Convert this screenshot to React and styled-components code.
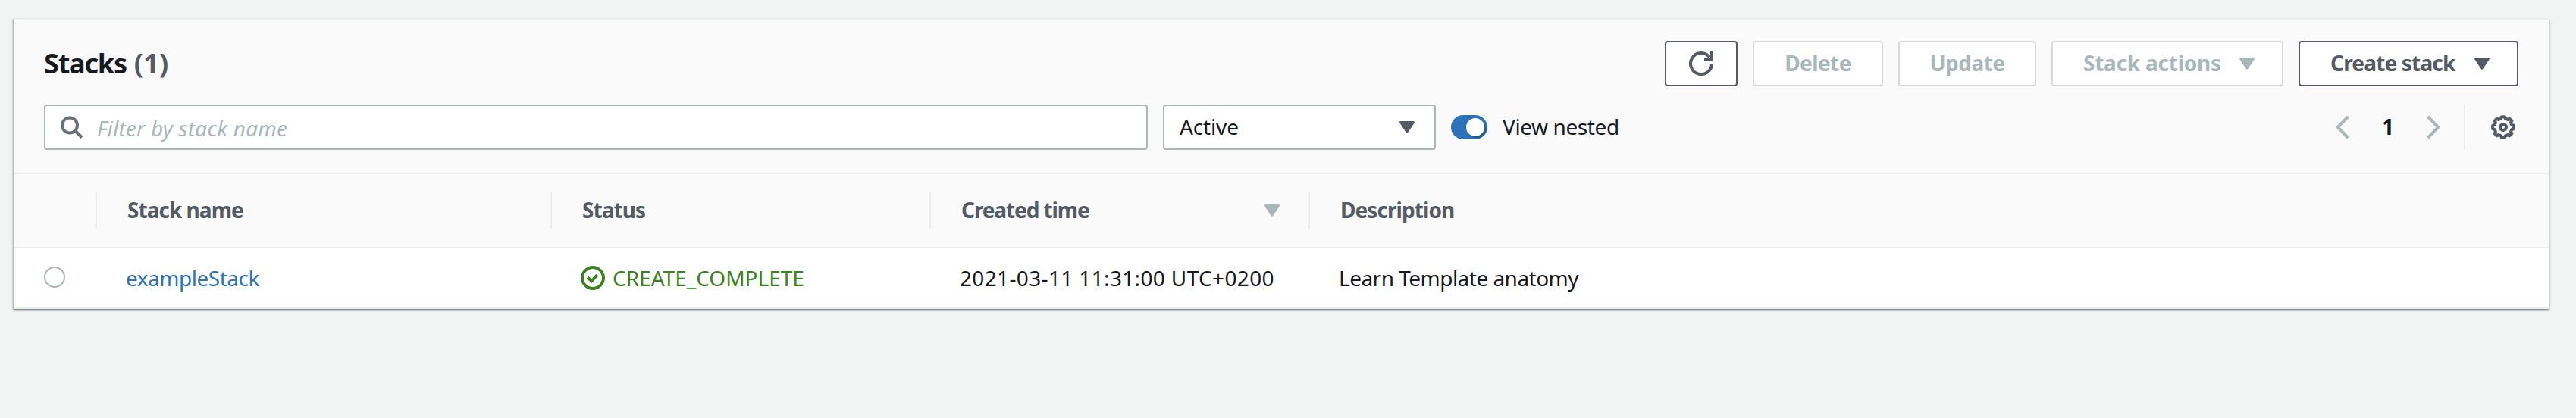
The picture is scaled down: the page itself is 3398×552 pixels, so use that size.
import React from 'react';
import styled, { createGlobalStyle } from 'styled-components';

const GlobalStyle = createGlobalStyle`
  * { box-sizing: border-box; }
  body {
    margin: 0;
    background: #f2f3f3;
    color: #16191f;
    font: 400 28px/40px "Noto Sans", "Open Sans", sans-serif;
  }
  svg { display: block; flex: none; }
`;

const Page = styled.main`
  min-height: 552px;
  padding: 24px 36px 0 18px;
`;

const Panel = styled.section`
  border-top: 2px solid #eaeded;
  background: #fff;
  box-shadow:
    0 2px 2px 0 rgba(0, 28, 36, 0.3),
    2px 2px 2px 0 rgba(0, 28, 36, 0.15),
    -2px 2px 2px 0 rgba(0, 28, 36, 0.15);
`;

const Header = styled.header`
  display: flex;
  flex-direction: column;
  gap: 24px;
  padding: 28px 40px 30px;
  background: #fafafa;
  border-bottom: 2px solid #eaeded;
`;

const Bar = styled.div`
  display: flex;
  align-items: center;
  justify-content: space-between;
  height: 60px;
`;

const Text = styled.span`
  white-space: nowrap;
  letter-spacing: ${(p) => p.$track || 0}px;
`;

const Title = styled.h2`
  display: flex;
  gap: 10px;
  margin: 0;
  font-size: 36px;
  line-height: 48px;
`;

const Counter = styled(Text)`
  color: #545b64;
`;

const Actions = styled.div`
  display: flex;
  gap: 20px;
`;

const Button = styled.button`
  display: flex;
  align-items: center;
  justify-content: ${(p) => (p.$menu ? 'space-between' : 'center')};
  width: ${(p) => p.$width}px;
  height: 60px;
  padding: ${(p) => (p.$menu ? '0 36px 0 40px' : '0')};
  border: 2px solid ${(p) => (p.disabled ? '#d5dbdb' : '#545b64')};
  border-radius: 4px;
  background: #fff;
  color: ${(p) => (p.disabled ? '#aab7b8' : '#545b64')};
  font: inherit;
  font-weight: 700;

  ${Text} { padding-bottom: 2px; }
`;

const Group = styled.div`
  display: flex;
  align-items: center;
`;

const Field = styled.div`
  display: flex;
  align-items: center;
  height: 60px;
  border: 2px solid #aab7b8;
  border-radius: 4px;
  background: #fff;
`;

const Search = styled(Field)`
  gap: 18px;
  width: 1456px;
  padding-left: 20px;
`;

const Placeholder = styled(Text)`
  padding-top: 2px;
  color: #aab7b8;
  font-style: italic;
`;

const Select = styled(Field)`
  justify-content: space-between;
  width: 360px;
  margin: 0 20px;
  padding: 0 26px 0 20px;
  color: #545b64;

  ${Text} { padding-bottom: 2px; color: #16191f; }
`;

const Toggle = styled.span`
  display: flex;
  justify-content: flex-end;
  width: 48px;
  height: 32px;
  margin-right: 20px;
  padding: 4px;
  border-radius: 16px;
  background: #2e73b8;

  &::after {
    content: '';
    width: 24px;
    height: 24px;
    border-radius: 50%;
    background: #fff;
    box-shadow: 2px 2px 2px rgba(0, 0, 0, 0.25);
  }
`;

const ToggleLabel = styled(Text)`
  padding-bottom: 2px;
`;

const Pages = styled.div`
  display: flex;
  align-items: center;
  gap: 43px;
  height: 60px;
  padding-right: 31px;
  border-right: 2px solid #eaeded;
  color: #aab7b8;
`;

const PageNumber = styled.span`
  width: 16px;
  padding-bottom: 2px;
  color: #16191f;
  font-weight: 700;
`;

const Preferences = styled.div`
  padding: 0 4px 0 34px;
  color: #545b64;
`;

const Row = styled.div`
  display: grid;
  grid-template-columns: 110px 600px 500px 500px 1fr;
  align-items: center;
  border-bottom: 2px solid #eaeded;
`;

const HeadRow = styled(Row)`
  height: 98px;
  background: #fafafa;
  color: #545b64;
  font-weight: 700;
`;

const BodyRow = styled(Row)`
  height: 80px;
`;

const HeadCell = styled.div`
  display: flex;
  align-items: center;
  justify-content: space-between;
  height: 48px;
  padding: 0 38px 0 40px;
  border-right: 2px solid #eaeded;
  color: #aab7b8;

  &:last-child { border-right: 0; }
  ${Text} { padding-bottom: 2px; color: #545b64; }
`;

const Cell = styled.div`
  display: flex;
  align-items: center;
  gap: 10px;
  padding-left: ${(p) => (p.$control ? 40 : 38)}px;
  color: ${(p) => p.$color || 'inherit'};
`;

const Radio = styled.span`
  width: 28px;
  height: 28px;
  margin-bottom: 2px;
  border: 2px solid #aab7b8;
  border-radius: 50%;
  background: #fff;
`;

const Caret = () => (
  <svg width="20" height="16" viewBox="0 0 20 16">
    <path d="M1.5 1.5H18.5L10 14.2Z" fill="currentColor" stroke="currentColor" strokeWidth="3" strokeLinejoin="round" />
  </svg>
);

const RefreshIcon = () => (
  <svg width="32" height="32" viewBox="0 0 32 32" fill="none" stroke="currentColor" strokeWidth="4">
    <path d="M30 16A14 14 0 1 1 27 7.4" />
    <path d="M30 0V10H20" />
  </svg>
);

const SearchIcon = () => (
  <svg width="30" height="30" viewBox="0 0 30 30" fill="none" stroke="#687078" strokeWidth="4">
    <circle cx="12" cy="12.5" r="10" />
    <path d="M19 19.5L28 28.5" />
  </svg>
);

const CheckIcon = () => (
  <svg width="32" height="32" viewBox="0 0 32 32" fill="none" stroke="currentColor" strokeWidth="4">
    <circle cx="16" cy="16" r="14" />
    <path d="M9 15.2L14.4 20.2L22 12" />
  </svg>
);

const Chevron = ({ right }) => (
  <svg width="18" height="32" viewBox="0 0 18 32" fill="none" stroke="currentColor" strokeWidth="4">
    <path d={right ? 'M1.6 2L15.2 16L1.6 30' : 'M16.4 2L2.8 16L16.4 30'} />
  </svg>
);

const gearOutline = Array.from({ length: 8 }, (_, i) =>
  [[-14, 11.7], [-9, 14], [9, 14], [14, 11.7]].map(([deg, r]) => {
    const a = ((i * 45 + deg) * Math.PI) / 180;
    return `${(16 + r * Math.cos(a)).toFixed(2)} ${(16 + r * Math.sin(a)).toFixed(2)}`;
  }),
).flat().join('L');

const GearIcon = () => (
  <svg width="32" height="32" viewBox="0 0 32 32" fill="none" stroke="currentColor" strokeWidth="4">
    <path d={`M${gearOutline}Z`} strokeLinejoin="round" />
    <circle cx="16" cy="16" r="4" />
  </svg>
);

export default function App() {
  return (
    <Page>
      <GlobalStyle />
      <Panel>
        <Header>
          <Bar>
            <Title>
              <Text $track={-1.2}>Stacks</Text>
              <Counter $track={0.2}>(1)</Counter>
            </Title>
            <Actions>
              <Button $width={96} aria-label="Refresh"><RefreshIcon /></Button>
              <Button $width={172} disabled><Text $track={-0.58}>Delete</Text></Button>
              <Button $width={182} disabled><Text $track={-0.5}>Update</Text></Button>
              <Button $width={306} $menu disabled><Text $track={-0.24}>Stack actions</Text><Caret /></Button>
              <Button $width={290} $menu><Text $track={-0.82}>Create stack</Text><Caret /></Button>
            </Actions>
          </Bar>
          <Bar>
            <Group>
              <Search>
                <SearchIcon />
                <Placeholder $track={0.2}>Filter by stack name</Placeholder>
              </Search>
              <Select><Text $track={-0.15}>Active</Text><Caret /></Select>
              <Toggle role="switch" aria-checked="true" />
              <ToggleLabel $track={-0.4}>View nested</ToggleLabel>
            </Group>
            <Group>
              <Pages>
                <Chevron />
                <PageNumber>1</PageNumber>
                <Chevron right />
              </Pages>
              <Preferences><GearIcon /></Preferences>
            </Group>
          </Bar>
        </Header>
        <HeadRow>
          <HeadCell />
          <HeadCell><Text $track={-0.97}>Stack name</Text></HeadCell>
          <HeadCell><Text $track={-0.94}>Status</Text></HeadCell>
          <HeadCell><Text $track={-1.1}>Created time</Text><Caret /></HeadCell>
          <HeadCell><Text $track={-0.93}>Description</Text></HeadCell>
        </HeadRow>
        <BodyRow>
          <Cell $control><Radio role="radio" aria-checked="false" /></Cell>
          <Cell $color="#2e73b8"><Text $track={-0.48}>exampleStack</Text></Cell>
          <Cell $color="#3c8124"><CheckIcon /><Text>CREATE_COMPLETE</Text></Cell>
          <Cell><Text $track={0.35}>2021-03-11 11:31:00 UTC+0200</Text></Cell>
          <Cell><Text $track={-0.52}>Learn Template anatomy</Text></Cell>
        </BodyRow>
      </Panel>
    </Page>
  );
}
